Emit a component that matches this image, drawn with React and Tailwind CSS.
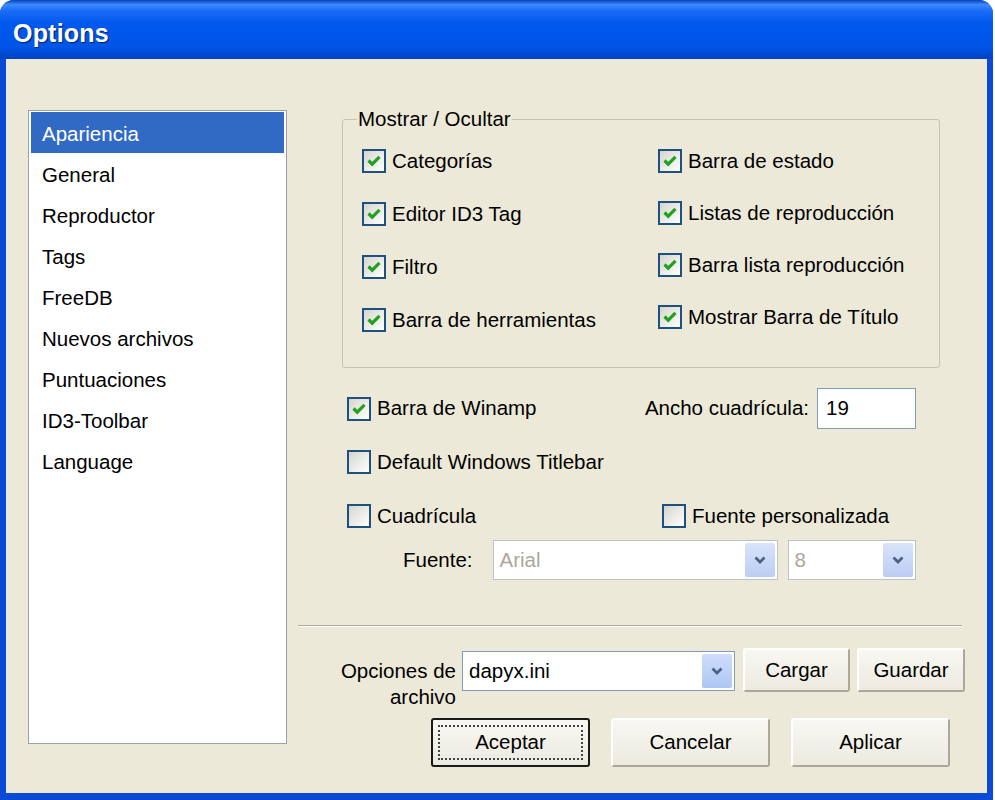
import React from 'react';

const font = { fontFamily: '"Liberation Sans", Arial, sans-serif' };

const Check = ({ checked }) => (
  <span className="w-[24px] h-[24px] border-2 border-[#1C5180] bg-linear-to-br from-[#D6D5CC] to-white flex items-center justify-center shrink-0">
    {checked && (
      <svg width="16" height="16" viewBox="0 0 16 16">
        <path d="M2.5 7.5 L6.2 11.2 L13.5 3.8" fill="none" stroke="#21A121" strokeWidth="3.2" />
      </svg>
    )}
  </span>
);

const CheckRow = ({ checked, label }) => (
  <div className="flex items-center gap-[6px] h-[26px] whitespace-nowrap">
    <Check checked={checked} />
    <span>{label}</span>
  </div>
);

const Chevron = ({ color = '#4D6185' }) => (
  <svg width="16" height="16" viewBox="0 0 16 16">
    <path d="M3.5 5.5 L8 10 L12.5 5.5" fill="none" stroke={color} strokeWidth="2.8" />
  </svg>
);

const Combo = ({ value, width, disabled }) => (
  <div
    className={`flex items-center h-[40px] border bg-white pl-[6px] pr-[2px] ${
      disabled ? 'border-[#B9C3CC] text-[#ACA899]' : 'border-[#7F9DB9] text-black'
    } ${width}`}
  >
    <span className="flex-1">{value}</span>
    <span
      className={`w-[30px] h-[34px] rounded-[2px] flex items-center justify-center ${
        disabled ? 'bg-linear-to-b from-[#D8E4FA] to-[#BBCDF3]' : 'bg-linear-to-b from-[#CFDDFB] to-[#AEC6F5]'
      }`}
    >
      <Chevron />
    </span>
  </div>
);

const Button = ({ children, width, className = '' }) => (
  <button
    className={`h-[44px] rounded-[3px] bg-linear-to-b from-[#F8F7F2] to-[#ECEAE0] border-2 border-t-white border-l-white border-b-[#ACA899] border-r-[#ACA899] ${width} ${className}`}
  >
    {children}
  </button>
);

const items = [
  'Apariencia',
  'General',
  'Reproductor',
  'Tags',
  'FreeDB',
  'Nuevos archivos',
  'Puntuaciones',
  'ID3-Toolbar',
  'Language',
];

export default function App() {
  return (
    <div className="w-[995px] h-[800px] bg-white text-[20.5px] text-black" style={font}>
      <div className="w-[993px] h-[800px] rounded-t-[14px] bg-[#0A4BD6] flex flex-col overflow-hidden">
        {/* Title bar */}
        <div className="h-[59px] shrink-0 flex items-center pl-[13px] pt-[9px] bg-[linear-gradient(to_bottom,#0842B8_0%,#3D8BFF_8%,#1A6CF6_18%,#0058EE_40%,#0055E5_80%,#0041C4_100%)]">
          <span className="text-white font-bold text-[25px] tracking-[0.2px] [text-shadow:1px_1px_1px_#0A1E6E]">
            Options
          </span>
        </div>

        {/* Client */}
        <div className="flex-1 mx-[6px] mb-[7px] bg-[#ECE9D8] flex pl-[22px] pt-[51px]">
          {/* List */}
          <div className="w-[259px] h-[634px] border border-[#9AA3AC] bg-white px-[2px] pt-[1px] shrink-0">
            {items.map((it, i) => (
              <div
                key={it}
                className={`h-[41px] flex items-center pl-[11px] pt-[3px] ${i === 0 ? 'bg-[#316AC5] text-white' : ''}`}
              >
                {it}
              </div>
            ))}
          </div>

          {/* Right column */}
          <div className="ml-[11px] w-[667px] flex flex-col">
            <fieldset className="ml-[44px] -mt-[2px] w-[598px] border border-[#C5C3B5] rounded-[3px] pl-[19px] pb-[34px]">
              <legend className="-ml-[5px] px-[1px] leading-[22px]">Mostrar / Ocultar</legend>
              <div className="flex pt-[18px]">
                <div className="w-[296px] flex flex-col gap-[27px]">
                  <CheckRow checked label="Categorías" />
                  <CheckRow checked label="Editor ID3 Tag" />
                  <CheckRow checked label="Filtro" />
                  <CheckRow checked label="Barra de herramientas" />
                </div>
                <div className="flex flex-col gap-[26px]">
                  <CheckRow checked label="Barra de estado" />
                  <CheckRow checked label="Listas de reproducción" />
                  <CheckRow checked label="Barra lista reproducción" />
                  <CheckRow checked label="Mostrar Barra de Título" />
                </div>
              </div>
            </fieldset>

            <div className="ml-[49px] w-[569px] mt-[20px] h-[41px] flex items-center justify-between">
              <CheckRow checked label="Barra de Winamp" />
              <div className="flex items-center gap-[8px]">
                <span>Ancho cuadrícula:</span>
                <div className="w-[99px] h-[41px] border border-[#7F9DB9] bg-white flex items-center pl-[8px]">19</div>
              </div>
            </div>

            <div className="ml-[49px] mt-[20px]">
              <CheckRow label="Default Windows Titlebar" />
            </div>

            <div className="ml-[49px] mt-[28px] flex">
              <div className="w-[315px]">
                <CheckRow label="Cuadrícula" />
              </div>
              <CheckRow label="Fuente personalizada" />
            </div>

            <div className="ml-[105px] mt-[11px] flex items-center">
              <span className="mr-[20px]">Fuente:</span>
              <Combo value="Arial" width="w-[285px]" disabled />
              <div className="w-[10px]" />
              <Combo value="8" width="w-[128px]" disabled />
            </div>

            <div className="mt-[45px] mr-[3px] border-t border-t-[#ACA899] border-b border-b-white" />

            <div className="mt-[21px] flex items-start">
              <div className="w-[158px] text-right leading-[26px] mt-[10px]">
                Opciones de
                <br />
                archivo
              </div>
              <div className="ml-[6px] mt-[3px]">
                <Combo value="dapyx.ini" width="w-[273px]" />
              </div>
              <Button width="w-[107px] ml-[8px]">Cargar</Button>
              <Button width="w-[108px] ml-[7px]">Guardar</Button>
            </div>

            <div className="mt-[8px] ml-[133px] flex gap-[21px]">
              <button className="w-[159px] h-[49px] rounded-[3px] border-2 border-[#1A1A1A] bg-linear-to-b from-[#F8F7F2] to-[#ECEAE0] p-[5px]">
                <span className="w-full h-full flex items-center justify-center border-2 border-dotted border-[#444]">
                  Aceptar
                </span>
              </button>
              <Button width="w-[159px] h-[49px]!">Cancelar</Button>
              <Button width="w-[159px] h-[49px]!">Aplicar</Button>
            </div>
          </div>
        </div>
      </div>
    </div>
  );
}
